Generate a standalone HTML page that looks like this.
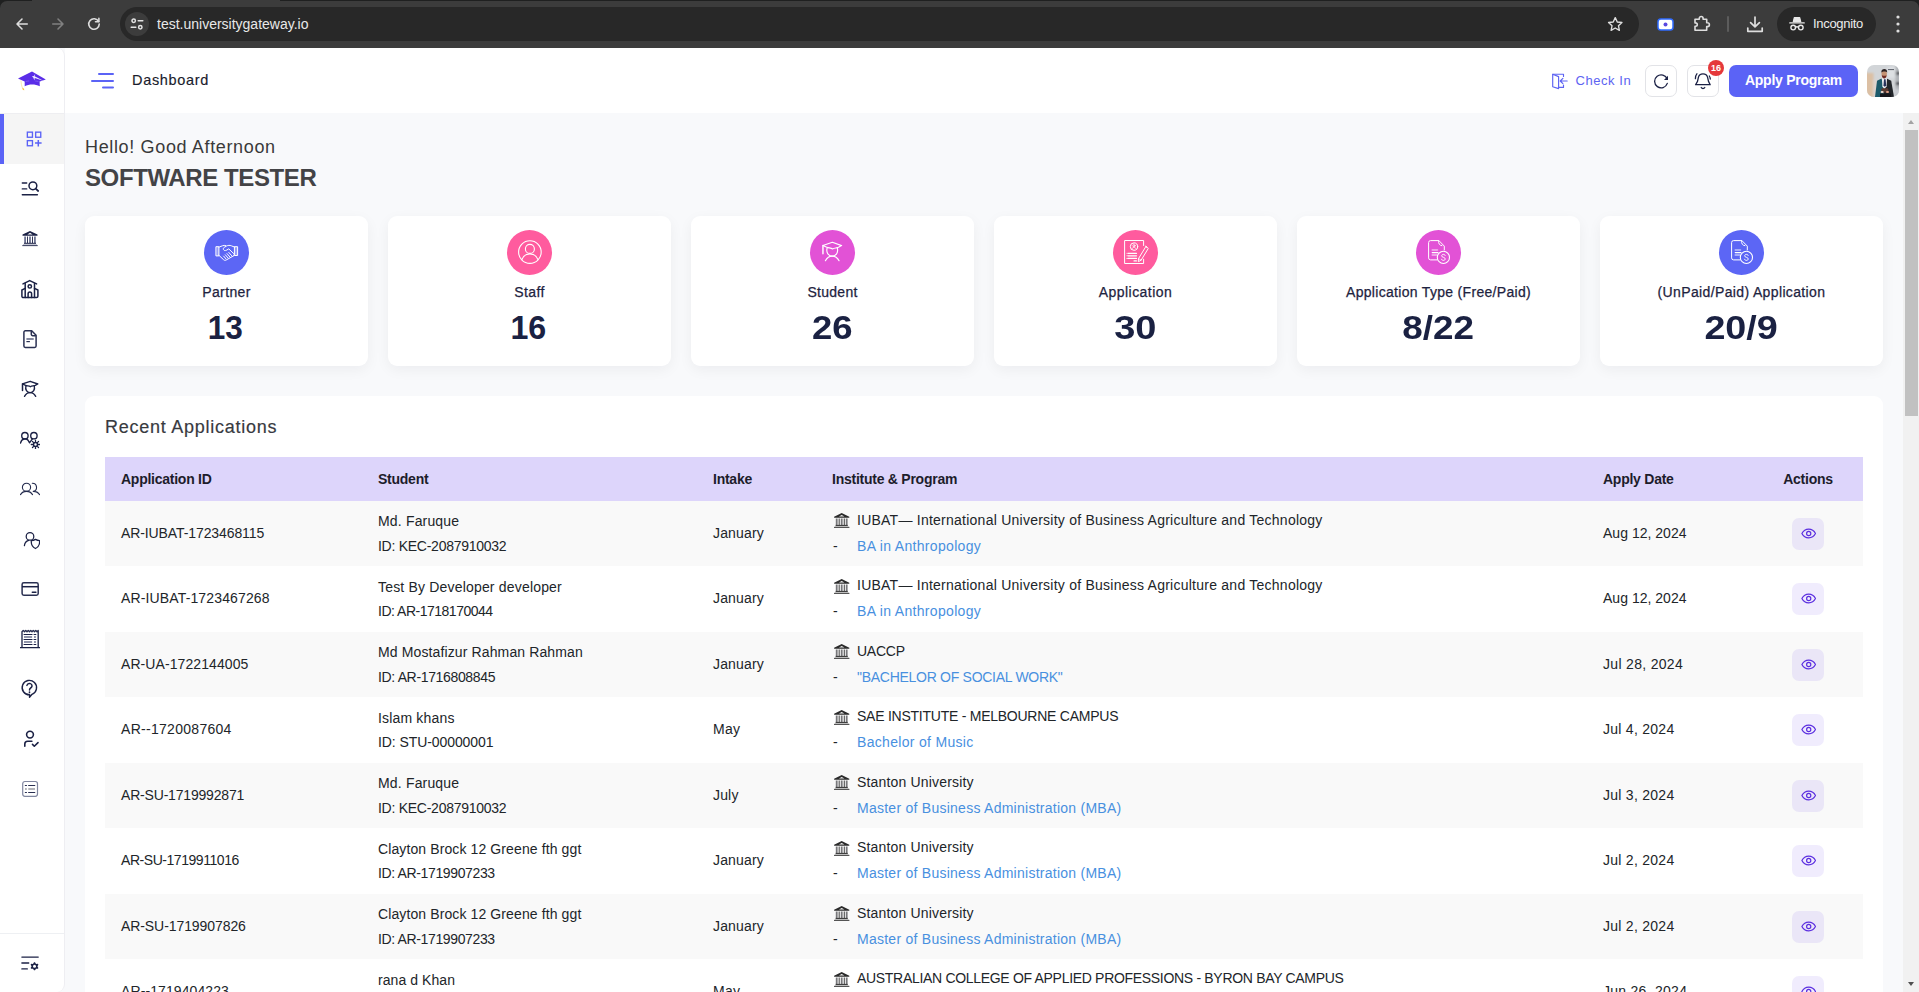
<!DOCTYPE html>
<html lang="en">
<head>
<meta charset="utf-8">
<title>Dashboard</title>
<style>
*{box-sizing:border-box;margin:0;padding:0}
html,body{width:1919px;height:992px;overflow:hidden;background:#f8f9fb;font-family:"Liberation Sans",Arial,sans-serif;color:#2b2b2b}
body{position:relative}
svg{display:block}
/* ---------- browser chrome ---------- */
#chrome{position:absolute;left:0;top:0;width:1919px;height:48px;background:#1f2020;overflow:hidden}
#chrome .tb{position:absolute;left:0;top:1px;width:1919px;height:47px;background:#3c3c3c;border-radius:7px 7px 0 0}
#chrome .topline{position:absolute;left:32px;top:0;width:248px;height:3px;background:#3c3c3c}
#chrome .omni{position:absolute;left:120px;top:7px;width:1519px;height:34px;border-radius:17px;background:#282828}
#chrome .site{position:absolute;left:5px;top:5px;width:24px;height:24px;border-radius:12px;background:#3c3c3c}
#chrome .url{position:absolute;left:37px;top:0;height:34px;line-height:34px;font-size:14px;color:#e8e8e8;letter-spacing:0;white-space:nowrap}
#chrome .ico{position:absolute}
#chrome .incog{position:absolute;left:1777px;top:7px;width:99px;height:34px;border-radius:17px;background:#282828}
#chrome .incog span{position:absolute;left:36px;top:0;line-height:34px;font-size:13px;color:#ececec;letter-spacing:-.31px}
#chrome .sep{position:absolute;left:1727px;top:16px;width:2px;height:16px;background:#5c5c5c;border-radius:1px}
/* ---------- sidebar ---------- */
#side{position:absolute;left:0;top:48px;width:65px;height:944px;background:#fff;border-right:1px solid #eeeef2;border-radius:0 8px 8px 0}
#side .logo{position:absolute;left:17px;top:22px}
#side .logoline{position:absolute;left:0;top:65px;width:64px;height:1px;background:#eeeef1}
#side .active{position:absolute;left:0;top:66px;width:64px;height:50px;background:#f5f5f5;border-left:4px solid #5b63f6}
#side .it{position:absolute;left:20px;width:20px;height:20px}
#side .botline{position:absolute;left:0;top:885px;width:64px;height:1px;background:#eef0f3}
/* ---------- header ---------- */
#head{position:absolute;left:65px;top:48px;width:1854px;height:65px;background:#fff}
#head .burger{position:absolute;left:26px;top:24px}
#head .title{-webkit-text-stroke:.15px #1a1c2c;position:absolute;left:67px;top:-.5px;line-height:65px;font-size:14.5px;color:#1a1c2c;letter-spacing:.68px;white-space:nowrap}
#head .checkin{position:absolute;left:1487px;top:25px}
#head .checkin-t{position:absolute;left:1510.5px;top:0;line-height:65px;font-size:13px;color:#5d63f2;letter-spacing:.55px;white-space:nowrap}
#head .sq{position:absolute;top:17px;width:32px;height:32px;border:1px solid #e2e3e7;border-radius:7px;background:#fff}
#head .badge{position:absolute;left:1643px;top:12px;width:16px;height:16px;border-radius:8px;background:#e5383b;color:#fff;font-size:9px;font-weight:bold;line-height:16px;text-align:center;letter-spacing:-.1px}
#head .apply{position:absolute;left:1664px;top:17px;width:129px;height:32px;border-radius:7px;background:#5b63f6;color:#fff;font-size:14px;font-weight:bold;line-height:31px;text-align:center;letter-spacing:-.25px;white-space:nowrap}
#head .avatar{position:absolute;left:1802px;top:17px;width:32px;height:32px;border-radius:7px;overflow:hidden}
/* ---------- scrollbar ---------- */
#sb{position:absolute;left:1903px;top:113px;width:16px;height:879px;background:#f1f1f1}
#sb .thumb{position:absolute;left:2px;top:17px;width:13px;height:286px;background:#c1c1c1}
#sb .up,#sb .dn{position:absolute;left:5px;width:0;height:0;border-left:3.5px solid transparent;border-right:3.5px solid transparent}
#sb .up{top:7px;border-bottom:4px solid #a3a3a3}
#sb .dn{bottom:6px;border-top:4px solid #505050}
/* ---------- main ---------- */
#main{position:absolute;left:65px;top:113px;width:1838px;height:879px;overflow:hidden}
.hello{position:absolute;left:20px;top:22px;font-size:18px;line-height:24px;color:#3a3a3a;letter-spacing:.65px;white-space:nowrap}
.name{position:absolute;left:20px;top:49.5px;font-size:24px;line-height:30px;font-weight:bold;color:#434346;letter-spacing:-.4px;white-space:nowrap}
.cards{position:absolute;left:20px;top:103px;width:1798px;display:flex;gap:20px}
.card{flex:1 1 0;height:149.5px;background:#fff;border-radius:9px;box-shadow:0 4px 14px rgba(20,25,45,.05);position:relative;text-align:center}
.card .circ{position:absolute;left:50%;top:14px;margin-left:-22.5px;width:45px;height:45px;border-radius:50%}
.card .circ svg{position:absolute;left:0;top:0}
.card .lbl{-webkit-text-stroke:.25px #1e2340;position:absolute;left:0;right:0;top:66px;font-size:14px;line-height:20px;color:#1e2340;letter-spacing:.45px;white-space:nowrap}
.card .num{position:absolute;left:0;right:0;top:92px;font-size:33px;line-height:40px;font-weight:bold;color:#1a2142;letter-spacing:0;white-space:nowrap}
.card .num span{display:inline-block}
.panel{position:absolute;left:20px;top:283px;width:1798px;height:700px;background:#fff;border-radius:9px}
.panel h2{-webkit-text-stroke:.18px #383a3f;position:absolute;left:20px;top:19px;font-size:18px;line-height:24px;font-weight:normal;color:#383a3f;letter-spacing:.74px;white-space:nowrap}
table{position:absolute;left:20px;top:61px;width:1758px;border-collapse:collapse;table-layout:fixed;font-size:14px}
th{height:43.5px;background:#ddd5fb;text-align:left;padding:0 16px;font-weight:bold;color:#1d1d2b;font-size:14px;letter-spacing:-.25px;white-space:nowrap}
td{height:65.5px;padding:0 16px;vertical-align:middle;color:#212529;white-space:nowrap}
tbody tr:nth-child(odd) td{background:#f9f9f9}
th.c,td.c{text-align:center}
.l{display:block;line-height:24.5px;height:24.5px}
.stu{position:relative;top:.45px}
td>.t{position:relative;top:-.3px}
th{position:relative}
.ins .l{line-height:26px;height:26px;position:relative;padding-left:25px}
.ins{position:relative;top:-.35px}
.ins svg{position:absolute;left:2px;top:6.5px}
.ins .dash{position:absolute;left:1px;top:0}
a{color:#4890df;text-decoration:none}
.eye{display:inline-block;width:32px;height:32px;border-radius:7px;background:rgba(110,70,240,.1);vertical-align:middle;position:relative;top:.5px}
.eye svg{position:absolute;left:8px;top:8px}
</style>
</head>
<body>
<!-- CHROME -->
<div id="chrome">
  <div class="tb"></div>
  <div class="topline"></div>
  <!-- back -->
  <svg class="ico" style="left:15px;top:17px" width="14" height="14" viewBox="0 0 16 16" fill="none" stroke="#dedede" stroke-width="1.8" stroke-linecap="round" stroke-linejoin="round"><path d="M14 8H2.5M8 2.3L2.3 8 8 13.7"/></svg>
  <!-- forward -->
  <svg class="ico" style="left:51px;top:17px" width="14" height="14" viewBox="0 0 16 16" fill="none" stroke="#808080" stroke-width="1.8" stroke-linecap="round" stroke-linejoin="round"><path d="M2 8h11.5M8 2.3L13.7 8 8 13.7"/></svg>
  <!-- reload -->
  <svg class="ico" style="left:87px;top:17px" width="14" height="14" viewBox="0 0 16 16" fill="none" stroke="#dedede" stroke-width="1.8" stroke-linecap="round" stroke-linejoin="round"><path d="M13.3 5.2A6 6 0 1 0 14 8"/><path d="M13.6 1.6v3.9H9.7" /></svg>
  <div class="omni">
    <div class="site">
      <svg style="position:absolute;left:4px;top:4px" width="16" height="16" viewBox="0 0 16 16" fill="none" stroke="#e3e3e3" stroke-width="1.5" stroke-linecap="round"><circle cx="4.700" cy="4.800" r="1.700"/><path d="M9.200 4.800h4.600"/><circle cx="11.300" cy="11.200" r="1.700"/><path d="M2.200 11.200h4.600"/></svg>
    </div>
    <div class="url">test.universitygateway.io</div>
    <!-- star -->
    <svg style="position:absolute;left:1487px;top:9px" width="16.500" height="16.500" viewBox="0 0 18 18" fill="none" stroke="#dedede" stroke-width="1.5" stroke-linejoin="round"><path d="M9 1.8l2.2 4.7 5.1.6-3.8 3.5 1 5L9 13.1l-4.5 2.5 1-5L1.7 7.1l5.1-.6z"/></svg>
  </div>
  <!-- extension: screen recorder -->
  <svg class="ico" style="left:1656.5px;top:17.5px" width="17" height="13" viewBox="0 0 17 13"><rect x="1" y="1" width="15" height="11" rx="2.8" fill="#fff" stroke="#2f6bff" stroke-width="1.5"/><circle cx="8.5" cy="6.5" r="2" fill="#5a48e0"/></svg>
  <!-- puzzle -->
  <svg class="ico" style="left:1693px;top:15px" width="18" height="17" viewBox="0 0 18 17" fill="none" stroke="#dedede" stroke-width="1.6" stroke-linejoin="round"><path d="M2 4.2h4.3V3.4a1.9 1.9 0 0 1 3.8 0v.8h3.6v3.6h.8a1.9 1.9 0 0 1 0 3.8h-.8v3.6H2v-3.9h.6a1.7 1.7 0 0 0 0-3.4H2z"/></svg>
  <div class="sep"></div>
  <!-- download -->
  <svg class="ico" style="left:1746px;top:16px" width="18" height="17" viewBox="0 0 18 17" fill="none" stroke="#dedede" stroke-width="1.7" stroke-linecap="round" stroke-linejoin="round"><path d="M9 1v9.5M4.6 6.6L9 10.8l4.4-4.2M1.8 12v3.3h14.4V12"/></svg>
  <div class="incog">
    <svg style="position:absolute;left:12px;top:9px" width="16" height="16" viewBox="0 0 16 16" fill="none" stroke="#e8e8e8" stroke-width="1.4" stroke-linejoin="round"><path d="M4.4 5.6l1-4h5.2l1 4z" fill="#e8e8e8"/><path d="M.8 6.9h14.4" stroke-linecap="round"/><circle cx="4.2" cy="11.6" r="2.3"/><circle cx="11.8" cy="11.6" r="2.3"/><path d="M6.5 11.2c1-.6 2-.6 3 0"/></svg>
    <span>Incognito</span>
  </div>
  <!-- menu -->
  <svg class="ico" style="left:1895px;top:14px" width="6" height="20" viewBox="0 0 6 20" fill="#dedede"><circle cx="3" cy="3" r="1.6"/><circle cx="3" cy="10" r="1.6"/><circle cx="3" cy="17" r="1.6"/></svg>
</div>
<!-- SIDEBAR -->
<div id="side">
  <!-- logo -->
  <svg class="logo" width="30" height="22" viewBox="0 0 30 22">
    <path d="M1 8.500L15 1.400l13.800 8-7.400 2.500H8.600z" fill="#5a2de8"/>
    <path d="M7.700 11.400c4.800-.8 10-.8 14.900 0l.2 4.900c-4.600-2.400-10.500-2.500-15.100-.1z" fill="#5a2de8"/>
    <path d="M8.800 11.500c1.300-.3 2.400-.5 3.400-.6M18.200 11c1.200.1 2.200.3 3.200.5" stroke="#8f73f0" stroke-width=".6" fill="none"/>
    <path d="M18.200 3.900l-.6 2.300 9.300 4.800-9.200-3-.3 2.400-1.100-2.800-1.500-1.100 2-.6z" fill="#f1edff"/>
    <path d="M3.900 10.400l.5 4 .9 3.400" stroke="#f8dc92" stroke-width=".7" fill="none"/>
    <path d="M5.300 17.400l1.500 1.200.6 1.700-1.300-.2-.7-1.200z" fill="#f5c443"/>
  </svg>
  <div class="logoline"></div>
  <div class="active"></div>
  <!-- dashboard (active) -->
  <svg class="it" style="left:24px;top:81px" viewBox="0 0 20 20" fill="none" stroke="#5b63f6" stroke-width="1.35"><rect x="3.35" y="3.15" width="5.1" height="5.1"/><rect x="11.65" y="3.150" width="5.1" height="5.1"/><rect x="3.35" y="11.65" width="5.1" height="5.1"/><path d="M11 14.100h6.600M14.300 10.900v6.500" stroke-width="1.5"/></svg>
  <!-- search list -->
  <svg class="it" style="top:130px" viewBox="0 0 20 20" fill="none" stroke="#1b2145" stroke-width="1.5"><path d="M2.300 5h4.400M2.300 10.900h4.400M2.300 16.800h15.100" stroke-linecap="round" stroke-width="1.400"/><circle cx="12.900" cy="7.800" r="3.900"/><path d="M15.700 10.700l2.500 2.300" stroke-linecap="round" stroke-width="1.700"/></svg>
  <!-- bank -->
  <svg class="it" style="top:180px" viewBox="0 0 20 20" fill="#1b2145"><path d="M10 2.900l7.500 3.700v1.100H2.500V6.600zM10 4.800L7.300 6.500h5.400z" fill-rule="evenodd"/><path d="M4.200 8.500h1.800v6.400H4.200zM9.100 8.500h1.800v6.400H9.100zM14 8.500h1.800v6.400H14z" fill="#6d7392"/><path d="M7 8.500h.9v6.400H7zM12.100 8.500h.9v6.400h-.9z"/><path d="M4 14.800h12v1H4z"/><path d="M3 16.300h14v.7H3z" fill="#a9adc0"/><path d="M2.300 17.200h15.400v.9H2.300z"/></svg>
  <!-- school -->
  <svg class="it" style="top:231px" viewBox="0 0 20 20" fill="none" stroke="#1b2145" stroke-width="1.5" stroke-linejoin="round" stroke-linecap="round"><path d="M3 4.900l6.700-3.300 6.900 3.300"/><path d="M5.200 4.600v14M14.500 4.600v14"/><path d="M5.200 9.300L1.900 11v6.200a1.400 1.400 0 0 0 1.400 1.400h13.200a1.400 1.400 0 0 0 1.400-1.400V11l-3.400-1.700"/><circle cx="9.800" cy="7.400" r="1.700"/><path d="M8.100 18.400v-3.700a1.700 1.700 0 0 1 3.500 0v3.700"/></svg>
  <!-- document -->
  <svg class="it" style="top:281px" viewBox="0 0 20 20" fill="none" stroke="#2a3052" stroke-width="1.5" stroke-linejoin="round"><path d="M11.700 1.800H5.300a1.400 1.400 0 0 0-1.400 1.400v13.900a1.400 1.400 0 0 0 1.400 1.400h9.400a1.400 1.400 0 0 0 1.400-1.400V6.300z"/><path d="M11.300 2v3.300a1.400 1.400 0 0 0 1.400 1.400h3.200"/><path d="M6.400 10h7.300" stroke="#5b6180" stroke-width="1.5"/><path d="M6.400 12.600h3.500" stroke-width="1.200"/></svg>
  <!-- student -->
  <svg class="it" style="top:330.600px" viewBox="0 0 20 20" fill="none" stroke="#1b2145" stroke-width="1.350" stroke-linejoin="round" stroke-linecap="round"><path d="M2.500 4.900l7.700-2.600 7.600 2.700-2.600 1.400c-1.600.8-3.200.3-4.800 1.300-1.500-1-3.300-.6-4.800-1.400z"/><path d="M2.500 5v6.500" stroke-width="1.500"/><path d="M5.900 7c-.9 3.600 1 6.600 4.200 6.600s5.100-3 4.200-6.600"/><path d="M4.500 17.400c1.400-2.600 3.300-3.800 5.600-3.800s4.200 1.200 5.600 3.800"/></svg>
  <!-- users gear -->
  <svg class="it" style="top:381px" viewBox="0 0 20 20" fill="none" stroke="#1b2145" stroke-width="1.350" stroke-linecap="round" stroke-linejoin="round"><circle cx="4.900" cy="6.700" r="3.200"/><circle cx="13.900" cy="6.700" r="3.200"/><path d="M.5 14.100c.6-2.400 2-3.800 3.600-4.100h2.200c1.300.3 2.300 1.600 3.200 3.800l2.700-3.600"/><circle cx="15.500" cy="15.500" r="2" stroke-width="1.500"/><path d="M15.500 11.300v1.200M15.500 18.500v1.200M11.300 15.500h1.200M18.500 15.500h1.200M12.500 12.500l.9.900M17.600 17.600l.9.900M18.500 12.500l-.9.900M13.400 17.600l-.9.900" stroke-width="1.300"/></svg>
  <!-- users -->
  <svg class="it" style="top:431px" viewBox="0 0 20 20" fill="none" stroke="#232a4d" stroke-width="1.100" stroke-linecap="round"><circle cx="6.500" cy="8.300" r="4.100"/><path d="M.5 15.600c1.300-2.200 3.300-3.200 6-3.200s4.700 1 6 3.200"/><path d="M12.300 4.300a4.100 4.100 0 0 1 1 8.100M13.300 12.400c2.800 0 4.900 1 6.300 3.200"/></svg>
  <!-- user shield -->
  <svg class="it" style="top:482px" viewBox="0 0 20 20" fill="none" stroke="#1b2145" stroke-width="1.250" stroke-linecap="round" stroke-linejoin="round"><circle cx="10" cy="6.400" r="3.800"/><path d="M4.400 15.600c.3-2.800 1.800-4.600 4.200-5.300"/><path d="M11.300 10.700c1.700-.1 3-.6 4.200-1.300 1.200.7 2.500 1.200 4.100 1.300.3 3.600-1 6.300-4.100 7.800-3.100-1.500-4.500-4.200-4.200-7.800z"/></svg>
  <!-- credit card -->
  <svg class="it" style="top:530px" viewBox="0 0 20 20" fill="none" stroke="#2a3052" stroke-width="1.500" stroke-linejoin="round"><rect x="2.100" y="4.700" width="16.100" height="12.500" rx="1.700"/><path d="M2 8.700h16.300" stroke="#1b2145"/><path d="M12.300 14.300h3.600" stroke="#1b2145" stroke-linecap="round"/></svg>
  <!-- receipt -->
  <svg class="it" style="top:581px" viewBox="0 0 20 20" fill="none" stroke="#2a3052" stroke-width="1.400" stroke-linejoin="round"><path d="M2 18.500V2.800l1.250-1.400 1.250 1.400 1.250-1.400L7 2.800l1.250-1.400L9.500 2.800l1.250-1.400L12 2.800l1.250-1.400 1.250 1.400 1.250-1.400L17 2.800l1.200-1.200v16.900" /><path d="M0 18.600h20" stroke="#1b2145" stroke-linecap="round" stroke-width="1.300"/><path d="M4 5.500h8.100M14 5.500h1.900M4 10.500h8.100M14 10.500h1.900M4 15.500h8.100M14 15.500h1.900" stroke="#1b2145" stroke-width="1" stroke-linecap="round"/><path d="M4 8h8.100M14 8h1.900M4 13h8.100M14 13h1.900" stroke="#6d7390" stroke-width="1.500"/></svg>
  <!-- help -->
  <svg class="it" style="top:631px" viewBox="0 0 20 20" fill="none" stroke="#1b2145" stroke-width="1.400" stroke-linecap="round" stroke-linejoin="round"><path d="M9.600 15.800A7.200 7.200 0 1 1 12 15.300L9.500 18.300z"/><path d="M6.900 6.400c.5-1.600 2-2.200 3.400-1.800 1.500.4 2.200 2 1.300 3.400-.7 1-2.100 1.500-2.100 3" stroke-width="1.500"/><path d="M9.500 13.100v.5" stroke-width="1.600"/></svg>
  <!-- user check -->
  <svg class="it" style="top:681px" viewBox="0 0 20 20" fill="none" stroke="#1b2145" stroke-width="1.600" stroke-linecap="round" stroke-linejoin="round"><circle cx="10" cy="5.600" r="3.400"/><path d="M4.800 17.300v-2.200a2.800 2.800 0 0 1 2.800-2.800h4.300"/><path d="M12.500 15.400l1.800 1.800 3.700-3.600"/></svg>
  <!-- list -->
  <svg class="it" style="top:731px" viewBox="0 0 20 20" fill="none" stroke-linecap="round"><rect x="2.700" y="2.500" width="14.800" height="14.800" rx="2.200" stroke="#8187a0" stroke-width="1.200"/><path d="M5.300 6.500h1.200M8.600 6.500h6.200M5.300 13.500h1.200M8.600 13.500h6.200" stroke="#2a3052" stroke-width="1.100"/><path d="M5 10h1.800M8.300 10h6.700" stroke="#9a9ca3" stroke-width="1.700" stroke-linecap="butt"/></svg>
  <div class="botline"></div>
  <!-- settings list -->
  <svg class="it" style="top:905px" viewBox="0 0 20 20" fill="none" stroke="#1b2145" stroke-width="1.400" stroke-linecap="round"><path d="M1.900 4.100h16.300M1.900 10h6.800M1.900 15.900h5.400"/><path d="M15 9.300l1 1.600 1.900-.1.500.9-1 1.600 1 1.600-.5.900-1.900-.1-1 1.600h-1l-1-1.600-1.900.1-.5-.9 1-1.600-1-1.600.5-.9 1.900.1 1-1.600z" fill="#1b2145" stroke="none"/><circle cx="14.500" cy="13.300" r="1.500" fill="#fff" stroke="none"/></svg>
</div>
<!-- HEADER -->
<div id="head">
  <svg class="burger" style="margin-left:-.5px" width="24" height="18" viewBox="0 0 24 18" fill="none" stroke="#5b63f6" stroke-width="2" stroke-linecap="round"><path d="M8 2h14M1 9h21M12 15.500h10"/></svg>
  <div class="title">Dashboard</div>
  <svg class="checkin" width="16" height="17" viewBox="0 0 16 17" fill="none" stroke="#5d63f2" stroke-width="1.150" stroke-linejoin="round" stroke-linecap="round"><path d="M.7 1.300l5.900 2.300v12L.7 13.700z"/><path d="M.7 1.200h10.800v2.300M6.800 14.400h4.700v-2.300"/><path d="M15.200 8H8.400M10.900 5.300L8.200 8l2.700 2.700"/></svg>
  <div class="checkin-t">Check In</div>
  <div class="sq" style="left:1580px">
    <svg style="position:absolute;left:7px;top:7px" width="16" height="16" viewBox="0 0 16 16" fill="none" stroke="#1b2145" stroke-width="1.300" stroke-linecap="round"><path d="M14.300 10.400A6.500 6.500 0 1 1 14.200 6"/><path d="M15 2.700v4.300h-4z" fill="#1b2145" stroke="none"/></svg>
  </div>
  <div class="sq" style="left:1622px">
    <svg style="position:absolute;left:6px;top:6px" width="18" height="19" viewBox="0 0 18 19" fill="none" stroke="#1b2145" stroke-width="1.300" stroke-linecap="round" stroke-linejoin="round"><path d="M1.600 12.700h14.600l-1.700-3.300-.9-4C13.100 3.100 11.300 1.900 9 1.900S4.900 3.100 4.400 5.400l-.9 4z"/><path d="M7.200 15.500c.4.700 1 1 1.800 1s1.400-.3 1.800-1" /><path d="M2.900 1.800C1.700 3.200 1.200 4.800 1.400 6.700M15.300 4c.7 1 1 2 1 3"/></svg>
  </div>
  <div class="badge">16</div>
  <div class="apply">Apply Program</div>
  <div class="avatar">
    <svg width="32" height="32" viewBox="0 0 32 32"><defs><filter id="bl1" x="-10%" y="-10%" width="120%" height="120%"><feGaussianBlur stdDeviation=".9"/></filter><filter id="bl2" x="-10%" y="-10%" width="120%" height="120%"><feGaussianBlur stdDeviation=".35"/></filter></defs><rect width="32" height="32" fill="#d2d5d8"/><g filter="url(#bl1)"><rect x="-2" y="8" width="8.500" height="26" fill="#dcc0a4"/><rect x="6" y="15" width="5" height="19" fill="#ddd3cc"/><rect x="20.500" y="2" width="8.500" height="11" fill="#dde0e3"/><rect x="28.500" y="0" width="5" height="34" fill="#aeb1b6"/><rect x="29" y="7" width="4" height="2.500" fill="#34373c"/><rect x="29" y="17" width="4" height="3" fill="#3f4247"/><rect x="27" y="24" width="6" height="6" fill="#c9ccd2"/></g><rect x="21" y="4.100" width="6" height="1" fill="#5a5d68" filter="url(#bl2)"/><g filter="url(#bl2)"><path d="M14.500 13.400l-4.500 2.400L8 32h8.500V20z" fill="#1f5a6b"/><path d="M19.600 13.400l4.600 2.300L27 32H16.500V20z" fill="#22252b"/><path d="M15 13.200h5l-.4 8-2.200 3-2-3z" fill="#f1f1f3"/><path d="M17 14.300h1.600l.6 6-1.400 1.600-1.300-1.600z" fill="#27305a"/><ellipse cx="17.200" cy="8.800" rx="2.700" ry="3.900" fill="#c49273"/><path d="M14.300 7.600c0-2.600 1.300-3.500 3-3.500s2.900.9 2.900 3.400c-1-1.400-4.800-1.400-5.900.1z" fill="#2a2224"/><path d="M14.900 10.300c1.400.7 3.200.7 4.600 0 0 2-.9 3.100-2.300 3.100s-2.300-1.100-2.300-3.100z" fill="#6e2b24"/><rect x="14.300" y="23.300" width="7" height="4.300" rx="1" fill="#5a3a32"/><rect x="13.600" y="26" width="3" height="2" rx="1" fill="#e8d8d0"/><rect x="19" y="26" width="3" height="2" rx="1" fill="#d99a80"/><rect x="13" y="28.500" width="11" height="3.500" fill="#16181c"/></g></svg>
  </div>
</div>
<!-- MAIN -->
<div id="main">
  <div class="hello">Hello! Good Afternoon</div>
  <div class="name">SOFTWARE TESTER</div>
  <div class="cards">
    <div class="card"><div class="circ" style="background:#5c66f5"><svg width="45" height="45" viewBox="0 0 45 45"><g fill="none" stroke="#fff" stroke-width="1" stroke-linejoin="round" stroke-linecap="round"><path d="M12.300 16.700h2.600v9.200h-2.600zM30.800 16.700h2.800v8.800h-2.800z" fill="rgba(255,255,255,.35)"/><path d="M14.900 17.200l3.500-1.400c1.300-.5 2.300-.5 3.400-.2M30.800 17.200l-3.400-1.400c-1.700-.7-3.400-.5-4.800.2l-2.400 1.400c-1 .6-1.100 1.600-.6 2.400.6.900 1.700 1 2.700.5l2.100-1.200"/><path d="M25 19.100l4.800 4.600c.6.600.6 1.400.1 1.900M14.900 25.300l4.800 4.500c.8.700 1.700.7 2.500.2l7.600-4.300"/><path d="M21.300 24.800l2.600 3M23 23.600l2.700 3.100M24.800 22.400l2.800 3.200M19.600 26.100l2.400 2.800"/></g></svg></div><div class="lbl" style="letter-spacing:0.382px;">Partner</div><div class="num"><span style="transform:translateX(-1px) scaleX(.956)">13</span></div></div>
    <div class="card"><div class="circ" style="background:#ff5b9e"><svg width="45" height="45" viewBox="0 0 45 45"><g fill="none" stroke="#fff" stroke-width="1.100"><circle cx="22.900" cy="22.100" r="11.300"/><circle cx="22.900" cy="18.900" r="4.500"/><path d="M14.800 29.700c1.500-3.900 4.200-5.800 8.100-5.800s6.600 1.900 8.100 5.800"/></g></svg></div><div class="lbl" style="letter-spacing:0.4px;">Staff</div><div class="num"><span style="transform:translateX(-1px) scaleX(.976)">16</span></div></div>
    <div class="card"><div class="circ" style="background:#e252d6"><svg width="45" height="45" viewBox="0 0 45 45"><g transform="translate(9.900 9.500) scale(1.220)" fill="none" stroke="#fff" stroke-width=".95" stroke-linejoin="round" stroke-linecap="round"><path d="M2.500 4.900l7.700-2.600 7.600 2.700-2.600 1.400c-1.600.8-3.200.3-4.800 1.300-1.500-1-3.300-.6-4.800-1.400z"/><path d="M2.500 5v6.500" stroke-width="1.400" stroke="rgba(255,255,255,.85)"/><path d="M5.900 7c-.9 3.600 1 6.600 4.200 6.600s5.100-3 4.200-6.600"/><path d="M4.500 17.400c1.400-2.600 3.300-3.800 5.600-3.800s4.200 1.200 5.600 3.800"/></g></svg></div><div class="lbl" style="letter-spacing:0.284px;">Student</div><div class="num"><span style="transform:scaleX(1.106)">26</span></div></div>
    <div class="card"><div class="circ" style="background:#ff5b9e"><svg width="45" height="45" viewBox="0 0 45 45"><g fill="none" stroke="#fff" stroke-width="1" stroke-linejoin="round" stroke-linecap="round"><path d="M30.600 15.500v-5H11.600v23h19v-4.300"/><circle cx="21" cy="16.600" r="3.700"/><circle cx="21" cy="15.700" r="1.100" stroke-width=".8"/><path d="M18.900 19c.5-1.200 1.200-1.700 2.100-1.700s1.600.5 2.100 1.700" stroke-width=".8"/><path d="M15.200 23.300h8.300M15.200 25.800h8.300M15.200 28.400h8.300" stroke-width="1.300"/><path d="M14 23.300h.2M14 25.800h.2M14 28.400h.2M21 30.900h2.500" stroke-width="1.100"/><path d="M32.700 16.400l2 1.200c.5.300.6.800.3 1.300l-6.900 11.300-2.800 1.500.2-3.100 6.900-11.300c.3-.500.800-.6 1.300-.3z"/><path d="M25.700 28.600l2.400 1.500" stroke-width=".8"/></g></svg></div><div class="lbl" style="letter-spacing:0.45px;">Application</div><div class="num"><span style="transform:scaleX(1.151)">30</span></div></div>
    <div class="card"><div class="circ" style="background:#e252d6"><svg width="45" height="45" viewBox="0 0 45 45"><g fill="none" stroke="#fff" stroke-width="1" stroke-linejoin="round" stroke-linecap="round"><path d="M21 29.900h-6.400a2 2 0 0 1-2-2V12.600a2 2 0 0 1 2-2h8.300l5.400 5.500v3.900"/><path d="M22.700 10.900c-.6 2.600.8 4.600 3.200 4.800" /><path d="M16.200 20.100h5.300M16.200 25.100h4.300" stroke-width="1.500" stroke="rgba(255,255,255,.6)"/><path d="M16.200 22.600h5.800" stroke-width="1.100"/><circle cx="27.400" cy="27.400" r="6.100" stroke-width="1.100"/><path d="M29.200 25.500c-.4-.8-1-1.100-1.800-1.100-1 0-1.700.6-1.700 1.400 0 2 3.500 1.100 3.500 3.100 0 .9-.7 1.500-1.800 1.500-.9 0-1.600-.4-1.900-1.200" stroke-width="1"/></g></svg></div><div class="lbl" style="letter-spacing:0.307px;">Application Type (Free/Paid)</div><div class="num"><span style="transform:scaleX(1.117)">8/22</span></div></div>
    <div class="card"><div class="circ" style="background:#5c66f5"><svg width="45" height="45" viewBox="0 0 45 45"><g fill="none" stroke="#fff" stroke-width="1" stroke-linejoin="round" stroke-linecap="round"><path d="M21 29.900h-6.400a2 2 0 0 1-2-2V12.600a2 2 0 0 1 2-2h8.300l5.400 5.500v3.900"/><path d="M22.700 10.900c-.6 2.600.8 4.600 3.200 4.800" /><path d="M16.200 20.100h5.300M16.200 25.100h4.300" stroke-width="1.500" stroke="rgba(255,255,255,.6)"/><path d="M16.200 22.600h5.800" stroke-width="1.100"/><circle cx="27.400" cy="27.400" r="6.100" stroke-width="1.100"/><path d="M29.200 25.500c-.4-.8-1-1.100-1.800-1.100-1 0-1.700.6-1.700 1.400 0 2 3.500 1.100 3.500 3.100 0 .9-.7 1.500-1.800 1.500-.9 0-1.600-.4-1.900-1.200" stroke-width="1"/></g></svg></div><div class="lbl" style="letter-spacing:0.361px;">(UnPaid/Paid) Application</div><div class="num"><span style="transform:scaleX(1.144)">20/9</span></div></div>
  </div>
  <div class="panel">
    <h2>Recent Applications</h2>
    <table>
      <colgroup><col style="width:257px"><col style="width:335px"><col style="width:119px"><col style="width:771px"><col style="width:166px"><col style="width:110px"></colgroup>
      <thead><tr><th>Application ID</th><th>Student</th><th>Intake</th><th>Institute &amp; Program</th><th>Apply Date</th><th class="c">Actions</th></tr></thead>
      <tbody>
        <tr><td><span class="t" style="letter-spacing:-0.1px">AR-IUBAT-1723468115</span></td><td><div class="stu"><span class="l"><span class="t" style="letter-spacing:0.17px">Md. Faruque</span></span><span class="l"><span class="t" style="letter-spacing:-0.265px">ID: KEC-2087910032</span></span></div></td><td><span class="t" style="letter-spacing:0.167px">January</span></td><td><div class="ins"><span class="l"><svg width="16" height="15" viewBox="0 0 16 15" fill="#2b2b2b"><path d="M7.700 0l7.600 3.700v1.100H.1V3.700zM7.700 1.900L5 3.600h5.400z" fill-rule="evenodd"/><path d="M1.800 5.600h1.800v6.400H1.800zM6.800 5.600h1.800v6.400H6.800zM11.800 5.600h1.800v6.400h-1.800z" fill="#77777a"/><path d="M4.700 5.600h.9v6.400h-.9zM9.800 5.600h.9v6.400h-.9z"/><path d="M1.600 11.900h12.200v1H1.600z"/><path d="M.8 13.200h13.800v.6H.8z" fill="#aaa"/><path d="M0 13.900h15.400v.9H0z"/></svg><span class="t" style="letter-spacing:0.244px">IUBAT— International University of Business Agriculture and Technology</span></span><span class="l"><span class="dash">-</span><a><span class="t" style="letter-spacing:0.324px">BA in Anthropology</span></a></span></div></td><td><span class="t" style="letter-spacing:0.02px">Aug 12, 2024</span></td><td class="c"><span class="eye"><svg width="16" height="16" viewBox="0 0 16 16" fill="none" stroke="#5b2ee0" stroke-width="1.200"><path d="M1.900 7.500C3.400 4.600 5.700 3.100 8.700 3.100s5.300 1.500 6.800 4.400c-1.500 2.900-3.800 4.400-6.800 4.400S3.400 10.400 1.900 7.500z" stroke-linejoin="round"/><circle cx="8.700" cy="7.500" r="2.100"/></svg></span></td></tr>
        <tr><td><span class="t" style="letter-spacing:0.139px">AR-IUBAT-1723467268</span></td><td><div class="stu"><span class="l"><span class="t" style="letter-spacing:0.183px">Test By Developer developer</span></span><span class="l"><span class="t" style="letter-spacing:-0.491px">ID: AR-1718170044</span></span></div></td><td><span class="t" style="letter-spacing:0.167px">January</span></td><td><div class="ins"><span class="l"><svg width="16" height="15" viewBox="0 0 16 15" fill="#2b2b2b"><path d="M7.700 0l7.600 3.700v1.100H.1V3.700zM7.700 1.900L5 3.600h5.400z" fill-rule="evenodd"/><path d="M1.800 5.600h1.800v6.400H1.800zM6.800 5.600h1.800v6.400H6.800zM11.800 5.600h1.800v6.400h-1.800z" fill="#77777a"/><path d="M4.700 5.600h.9v6.400h-.9zM9.800 5.600h.9v6.400h-.9z"/><path d="M1.600 11.900h12.200v1H1.600z"/><path d="M.8 13.200h13.800v.6H.8z" fill="#aaa"/><path d="M0 13.900h15.400v.9H0z"/></svg><span class="t" style="letter-spacing:0.244px">IUBAT— International University of Business Agriculture and Technology</span></span><span class="l"><span class="dash">-</span><a><span class="t" style="letter-spacing:0.324px">BA in Anthropology</span></a></span></div></td><td><span class="t" style="letter-spacing:0.02px">Aug 12, 2024</span></td><td class="c"><span class="eye"><svg width="16" height="16" viewBox="0 0 16 16" fill="none" stroke="#5b2ee0" stroke-width="1.200"><path d="M1.900 7.500C3.400 4.600 5.700 3.100 8.700 3.100s5.300 1.500 6.800 4.400c-1.500 2.900-3.800 4.400-6.800 4.400S3.400 10.400 1.900 7.500z" stroke-linejoin="round"/><circle cx="8.700" cy="7.500" r="2.100"/></svg></span></td></tr>
        <tr><td><span class="t" style="letter-spacing:0.081px">AR-UA-1722144005</span></td><td><div class="stu"><span class="l"><span class="t" style="letter-spacing:0.124px">Md Mostafizur Rahman Rahman</span></span><span class="l"><span class="t" style="letter-spacing:-0.344px">ID: AR-1716808845</span></span></div></td><td><span class="t" style="letter-spacing:0.167px">January</span></td><td><div class="ins"><span class="l"><svg width="16" height="15" viewBox="0 0 16 15" fill="#2b2b2b"><path d="M7.700 0l7.600 3.700v1.100H.1V3.700zM7.700 1.900L5 3.600h5.400z" fill-rule="evenodd"/><path d="M1.800 5.600h1.800v6.400H1.800zM6.800 5.600h1.800v6.400H6.800zM11.800 5.600h1.800v6.400h-1.800z" fill="#77777a"/><path d="M4.700 5.600h.9v6.400h-.9zM9.800 5.600h.9v6.400h-.9z"/><path d="M1.600 11.900h12.200v1H1.600z"/><path d="M.8 13.200h13.800v.6H.8z" fill="#aaa"/><path d="M0 13.900h15.400v.9H0z"/></svg><span class="t" style="letter-spacing:-0.25px">UACCP</span></span><span class="l"><span class="dash">-</span><a><span class="t" style="letter-spacing:-0.277px">&quot;BACHELOR OF SOCIAL WORK&quot;</span></a></span></div></td><td><span class="t" style="letter-spacing:0.312px">Jul 28, 2024</span></td><td class="c"><span class="eye"><svg width="16" height="16" viewBox="0 0 16 16" fill="none" stroke="#5b2ee0" stroke-width="1.200"><path d="M1.900 7.500C3.400 4.600 5.700 3.100 8.700 3.100s5.300 1.500 6.800 4.400c-1.500 2.900-3.800 4.400-6.800 4.400S3.400 10.400 1.900 7.500z" stroke-linejoin="round"/><circle cx="8.700" cy="7.500" r="2.100"/></svg></span></td></tr>
        <tr><td><span class="t" style="letter-spacing:0.289px">AR--1720087604</span></td><td><div class="stu"><span class="l"><span class="t" style="letter-spacing:0.17px">Islam khans</span></span><span class="l"><span class="t" style="letter-spacing:-0.082px">ID: STU-00000001</span></span></div></td><td><span class="t" style="letter-spacing:0.25px">May</span></td><td><div class="ins"><span class="l"><svg width="16" height="15" viewBox="0 0 16 15" fill="#2b2b2b"><path d="M7.700 0l7.600 3.700v1.100H.1V3.700zM7.700 1.900L5 3.600h5.400z" fill-rule="evenodd"/><path d="M1.800 5.600h1.800v6.400H1.800zM6.800 5.600h1.800v6.400H6.800zM11.800 5.600h1.800v6.400h-1.800z" fill="#77777a"/><path d="M4.700 5.600h.9v6.400h-.9zM9.800 5.600h.9v6.400h-.9z"/><path d="M1.600 11.900h12.200v1H1.600z"/><path d="M.8 13.200h13.800v.6H.8z" fill="#aaa"/><path d="M0 13.900h15.400v.9H0z"/></svg><span class="t" style="letter-spacing:-0.247px">SAE INSTITUTE - MELBOURNE CAMPUS</span></span><span class="l"><span class="dash">-</span><a><span class="t" style="letter-spacing:0.312px">Bachelor of Music</span></a></span></div></td><td><span class="t" style="letter-spacing:0.27px">Jul 4, 2024</span></td><td class="c"><span class="eye"><svg width="16" height="16" viewBox="0 0 16 16" fill="none" stroke="#5b2ee0" stroke-width="1.200"><path d="M1.900 7.500C3.400 4.600 5.700 3.100 8.700 3.100s5.300 1.500 6.800 4.400c-1.500 2.900-3.800 4.400-6.800 4.400S3.400 10.400 1.900 7.500z" stroke-linejoin="round"/><circle cx="8.700" cy="7.500" r="2.100"/></svg></span></td></tr>
        <tr><td><span class="t" style="letter-spacing:-0.185px">AR-SU-1719992871</span></td><td><div class="stu"><span class="l"><span class="t" style="letter-spacing:0.17px">Md. Faruque</span></span><span class="l"><span class="t" style="letter-spacing:-0.265px">ID: KEC-2087910032</span></span></div></td><td><span class="t" style="letter-spacing:0.167px">July</span></td><td><div class="ins"><span class="l"><svg width="16" height="15" viewBox="0 0 16 15" fill="#2b2b2b"><path d="M7.700 0l7.600 3.700v1.100H.1V3.700zM7.700 1.900L5 3.600h5.400z" fill-rule="evenodd"/><path d="M1.800 5.600h1.800v6.400H1.800zM6.800 5.600h1.800v6.400H6.800zM11.800 5.600h1.800v6.400h-1.800z" fill="#77777a"/><path d="M4.700 5.600h.9v6.400h-.9zM9.800 5.600h.9v6.400h-.9z"/><path d="M1.600 11.900h12.200v1H1.600z"/><path d="M.8 13.200h13.800v.6H.8z" fill="#aaa"/><path d="M0 13.900h15.400v.9H0z"/></svg><span class="t" style="letter-spacing:0.176px">Stanton University</span></span><span class="l"><span class="dash">-</span><a><span class="t" style="letter-spacing:0.257px">Master of Business Administration (MBA)</span></a></span></div></td><td><span class="t" style="letter-spacing:0.27px">Jul 3, 2024</span></td><td class="c"><span class="eye"><svg width="16" height="16" viewBox="0 0 16 16" fill="none" stroke="#5b2ee0" stroke-width="1.200"><path d="M1.900 7.500C3.400 4.600 5.700 3.100 8.700 3.100s5.300 1.500 6.800 4.400c-1.500 2.900-3.800 4.400-6.800 4.400S3.400 10.400 1.900 7.500z" stroke-linejoin="round"/><circle cx="8.700" cy="7.500" r="2.100"/></svg></span></td></tr>
        <tr><td><span class="t" style="letter-spacing:-0.452px">AR-SU-1719911016</span></td><td><div class="stu"><span class="l"><span class="t" style="letter-spacing:0.109px">Clayton Brock 12 Greene fth ggt</span></span><span class="l"><span class="t" style="letter-spacing:-0.366px">ID: AR-1719907233</span></span></div></td><td><span class="t" style="letter-spacing:0.167px">January</span></td><td><div class="ins"><span class="l"><svg width="16" height="15" viewBox="0 0 16 15" fill="#2b2b2b"><path d="M7.700 0l7.600 3.700v1.100H.1V3.700zM7.700 1.900L5 3.600h5.400z" fill-rule="evenodd"/><path d="M1.800 5.600h1.800v6.400H1.800zM6.800 5.600h1.800v6.400H6.800zM11.800 5.600h1.800v6.400h-1.800z" fill="#77777a"/><path d="M4.700 5.600h.9v6.400h-.9zM9.800 5.600h.9v6.400h-.9z"/><path d="M1.600 11.900h12.200v1H1.600z"/><path d="M.8 13.200h13.800v.6H.8z" fill="#aaa"/><path d="M0 13.900h15.400v.9H0z"/></svg><span class="t" style="letter-spacing:0.176px">Stanton University</span></span><span class="l"><span class="dash">-</span><a><span class="t" style="letter-spacing:0.257px">Master of Business Administration (MBA)</span></a></span></div></td><td><span class="t" style="letter-spacing:0.27px">Jul 2, 2024</span></td><td class="c"><span class="eye"><svg width="16" height="16" viewBox="0 0 16 16" fill="none" stroke="#5b2ee0" stroke-width="1.200"><path d="M1.900 7.500C3.400 4.600 5.700 3.100 8.700 3.100s5.300 1.500 6.800 4.400c-1.500 2.900-3.800 4.400-6.800 4.400S3.400 10.400 1.900 7.500z" stroke-linejoin="round"/><circle cx="8.700" cy="7.500" r="2.100"/></svg></span></td></tr>
        <tr><td><span class="t" style="letter-spacing:-0.081px">AR-SU-1719907826</span></td><td><div class="stu"><span class="l"><span class="t" style="letter-spacing:0.109px">Clayton Brock 12 Greene fth ggt</span></span><span class="l"><span class="t" style="letter-spacing:-0.366px">ID: AR-1719907233</span></span></div></td><td><span class="t" style="letter-spacing:0.167px">January</span></td><td><div class="ins"><span class="l"><svg width="16" height="15" viewBox="0 0 16 15" fill="#2b2b2b"><path d="M7.700 0l7.600 3.700v1.100H.1V3.700zM7.700 1.900L5 3.600h5.400z" fill-rule="evenodd"/><path d="M1.800 5.600h1.800v6.400H1.800zM6.800 5.600h1.800v6.400H6.800zM11.800 5.600h1.800v6.400h-1.800z" fill="#77777a"/><path d="M4.700 5.600h.9v6.400h-.9zM9.800 5.600h.9v6.400h-.9z"/><path d="M1.600 11.900h12.200v1H1.600z"/><path d="M.8 13.200h13.800v.6H.8z" fill="#aaa"/><path d="M0 13.900h15.400v.9H0z"/></svg><span class="t" style="letter-spacing:0.176px">Stanton University</span></span><span class="l"><span class="dash">-</span><a><span class="t" style="letter-spacing:0.257px">Master of Business Administration (MBA)</span></a></span></div></td><td><span class="t" style="letter-spacing:0.27px">Jul 2, 2024</span></td><td class="c"><span class="eye"><svg width="16" height="16" viewBox="0 0 16 16" fill="none" stroke="#5b2ee0" stroke-width="1.200"><path d="M1.900 7.500C3.400 4.600 5.700 3.100 8.700 3.100s5.300 1.500 6.800 4.400c-1.500 2.900-3.800 4.400-6.800 4.400S3.400 10.400 1.900 7.500z" stroke-linejoin="round"/><circle cx="8.700" cy="7.500" r="2.100"/></svg></span></td></tr>
        <tr><td><span class="t" style="letter-spacing:0.095px">AR--1719404223</span></td><td><div class="stu"><span class="l"><span class="t" style="letter-spacing:0.07px">rana d Khan</span></span><span class="l"><span class="t" style="letter-spacing:-0.469px">ID: AR-1719404100</span></span></div></td><td><span class="t" style="letter-spacing:0.25px">May</span></td><td><div class="ins"><span class="l"><svg width="16" height="15" viewBox="0 0 16 15" fill="#2b2b2b"><path d="M7.700 0l7.600 3.700v1.100H.1V3.700zM7.700 1.900L5 3.600h5.400z" fill-rule="evenodd"/><path d="M1.800 5.600h1.800v6.400H1.800zM6.800 5.600h1.800v6.400H6.800zM11.800 5.600h1.800v6.400h-1.800z" fill="#77777a"/><path d="M4.700 5.600h.9v6.400h-.9zM9.800 5.600h.9v6.400h-.9z"/><path d="M1.600 11.900h12.200v1H1.600z"/><path d="M.8 13.200h13.800v.6H.8z" fill="#aaa"/><path d="M0 13.900h15.400v.9H0z"/></svg><span class="t" style="letter-spacing:-0.31px">AUSTRALIAN COLLEGE OF APPLIED PROFESSIONS - BYRON BAY CAMPUS</span></span><span class="l"><span class="dash">-</span><a><span class="t" style="letter-spacing:0.143px">Diploma of Counselling</span></a></span></div></td><td><span class="t" style="letter-spacing:0.273px">Jun 26, 2024</span></td><td class="c"><span class="eye"><svg width="16" height="16" viewBox="0 0 16 16" fill="none" stroke="#5b2ee0" stroke-width="1.200"><path d="M1.900 7.500C3.400 4.600 5.700 3.100 8.700 3.100s5.300 1.500 6.800 4.400c-1.500 2.900-3.800 4.400-6.800 4.400S3.400 10.400 1.900 7.500z" stroke-linejoin="round"/><circle cx="8.700" cy="7.500" r="2.100"/></svg></span></td></tr>
      </tbody>
    </table>
  </div>
</div>
<!-- SCROLLBAR -->
<div id="sb"><div class="up"></div><div class="thumb"></div><div class="dn"></div></div>
</body>
</html>
